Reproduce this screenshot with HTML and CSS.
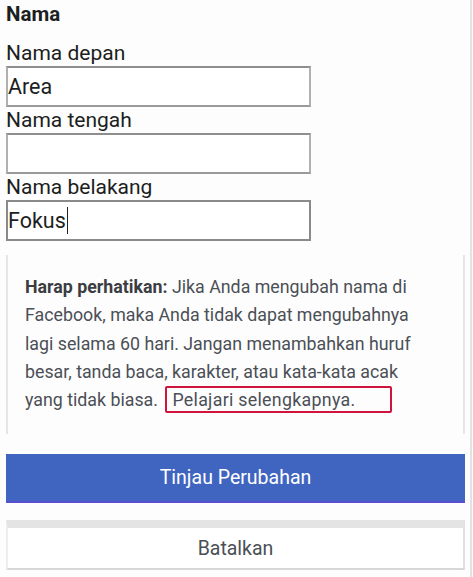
FILE: index.html
```html
<!DOCTYPE html>
<html lang="id">
<head>
  <meta charset="UTF-8" />
  <meta name="viewport" content="width=device-width, initial-scale=1.0"/>
  <title>Nama</title>
  <link rel="stylesheet" href="styles.css">
</head>
<body>
  <div class="page">
    <!-- Name fields -->
    <h3 class="section-title">Nama</h3>

    <label class="field-label" for="first">Nama depan</label>
    <div class="field" id="first">Area</div>

    <label class="field-label" for="middle">Nama tengah</label>
    <div class="field" id="middle"></div>

    <label class="field-label" for="last">Nama belakang</label>
    <div class="field field-active" id="last">Fokus<span class="caret"></span></div>

    <!-- Note -->
    <div class="notice">
      <b>Harap perhatikan:</b> Jika Anda mengubah nama di Facebook, maka Anda tidak dapat mengubahnya lagi selama 60 hari. Jangan menambahkan huruf besar, tanda baca, karakter, atau kata-kata acak yang tidak biasa. <span class="learn-more">Pelajari selengkapnya.</span>
    </div>

    <!-- Actions -->
    <button class="btn btn-primary">Tinjau Perubahan</button>
    <button class="btn btn-cancel">Batalkan</button>
  </div>
</body>
</html>
```

FILE: styles.css
```css
body {
  margin: 0;
  font-family: Roboto, 'Noto Sans', sans-serif;
  background-color: #fdfdfd;
  color: #1c1e21;
}
.page {
  width: 472px;
  min-height: 577px;
  border-right: 2px solid #e2e2e2;
  padding: 0 6px 0 6px;
  box-sizing: border-box;
}
.section-title {
  margin: 0;
  padding-top: 2px;
  font-size: 20.5px;
  line-height: 24px;
  font-weight: bold;
}
.field-label {
  display: block;
  font-size: 21px;
  line-height: 26px;
  color: #1c1e21;
}
.section-title + .field-label {
  margin-top: 14px;
}
.field {
  width: 305px;
  height: 41px;
  box-sizing: border-box;
  border: 2px solid #b0b0b0;
  border-top-color: #8e8e8e;
  border-bottom-color: #9a9a9a;
  background: #fff;
  font-size: 21.5px;
  line-height: 37px;
  padding: 0;
}
.field-active {
  border-color: #8a8a8a;
}
.caret {
  display: inline-block;
  width: 1px;
  height: 27px;
  background: #222;
  vertical-align: -6px;
  margin-left: 1px;
}
.notice {
  margin-top: 14px;
  width: 459px;
  box-sizing: border-box;
  border-left: 2px solid #e6e6e6;
  border-right: 2px solid #e6e6e6;
  padding: 18px 25px 20px 17px;
  font-size: 17.8px;
  line-height: 28.3px;
  color: #4b4f56;
  background: #fdfdfd;
}
.notice b {
  color: #3a3d42;
}
.learn-more {
  display: inline-block;
  border: 2px solid #d1143e;
  border-radius: 2px;
  padding: 0 34px 0 5px;
  line-height: 23px;
  margin-left: 3px;
  letter-spacing: 0.3px;
}
.btn {
  display: block;
  width: 459px;
  font-family: Roboto, 'Noto Sans', sans-serif;
  font-size: 19.5px;
  border: none;
  cursor: pointer;
}
.btn-primary {
  margin-top: 20px;
  height: 49px;
  background-color: #4065c0;
  color: #fff;
  border-bottom: 2px solid #5a4fd0;
}
.btn-cancel {
  margin-top: 17px;
  height: 50px;
  background-color: #fff;
  color: #4b4f56;
  border-top: 8px solid #e4e4e4;
  border-bottom: 2px solid #d8d8d8;
  border-left: 2px solid #eee;
  border-right: 2px solid #e0e0e0;
}
```
